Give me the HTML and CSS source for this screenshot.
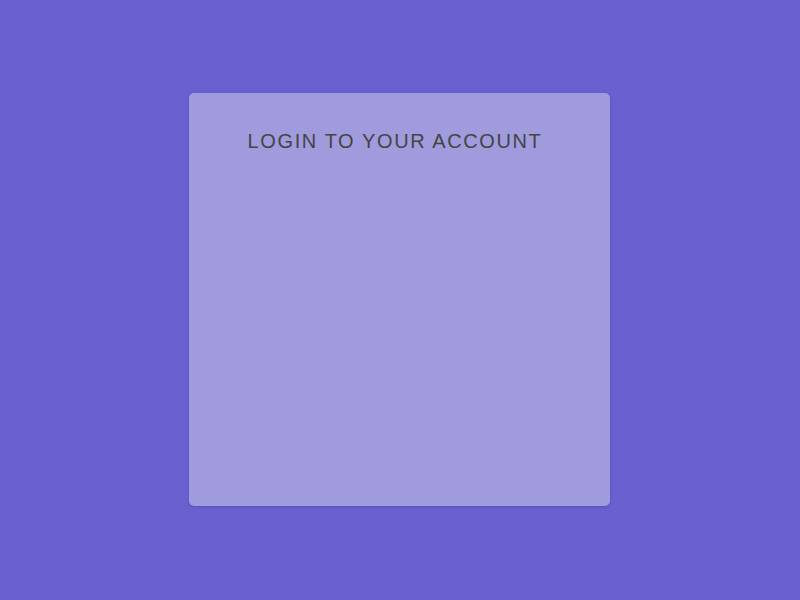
FILE: index.html
```html
<!DOCTYPE html>
<html>
<head>
<meta charset="utf-8">
<link rel="stylesheet" href="styles.css">
</head>
<body>
<main class="page">
  <section class="card">
    <h1 class="title">LOGIN TO YOUR ACCOUNT</h1>
  </section>
</main>
</body>
</html>
```
FILE: styles.css
```css
html, body { margin: 0; padding: 0; }
body {
  background: #6a60cf;
  font-family: "Liberation Sans", Arial, sans-serif;
}
.page {
  height: 600px;
  display: flex;
  align-items: center;
  justify-content: center;
}
.card {
  width: 421px;
  height: 413px;
  margin: 0 1px 1px 0;
  box-sizing: border-box;
  background: #a09bdc;
  border-radius: 5px;
  box-shadow: 0 1px 3px rgba(40, 30, 120, 0.25);
  padding: 36px 9px 0 0;
}
.title {
  margin: 0;
  text-align: center;
  font-weight: normal;
  font-size: 20px;
  line-height: 24px;
  letter-spacing: 1.6px;
  color: #444444;
}
```
